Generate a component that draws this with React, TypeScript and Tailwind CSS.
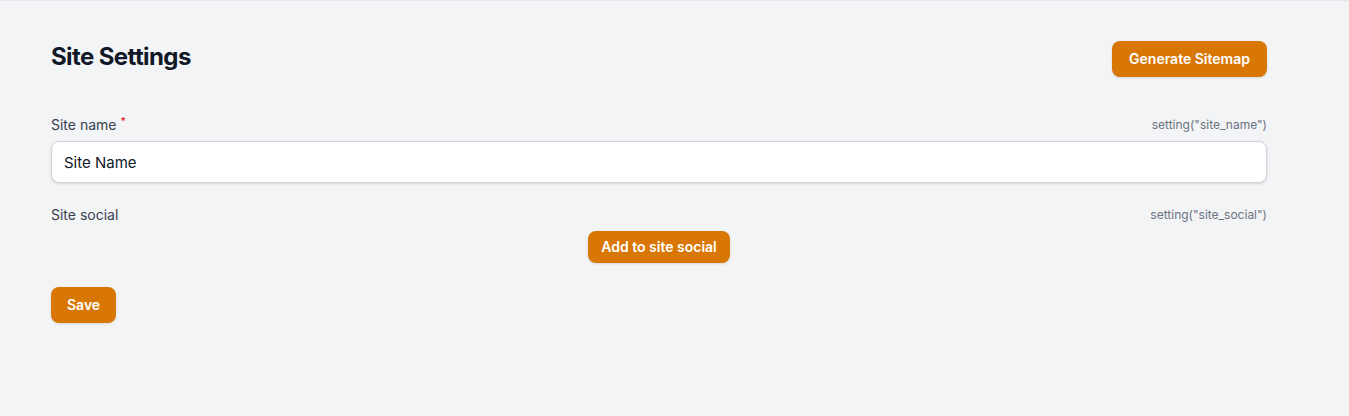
export default function App() {
    return (
        <div className="min-h-[416px] bg-[#f3f4f6] border-t border-[#e5e7eb] font-['Inter',sans-serif]">
            <div className="w-[1216px] ml-[51px] pt-[40px]">
                {/* Header */}
                <div className="flex items-center justify-between">
                    <h1 className="mb-[4px] text-2xl font-bold tracking-tight text-[#111827]">Site Settings</h1>
                    <button className="h-9 px-[17px] rounded-lg bg-[#d97706] text-white text-sm font-semibold shadow-sm">
                        Generate Sitemap
                    </button>
                </div>

                {/* Form */}
                <div className="mt-[38px] flex flex-col">
                    <div className="flex items-center justify-between h-5">
                        <label className="text-sm text-[#374151]">
                            Site name<sup className="text-[#dc2626] font-medium ml-1">*</sup>
                        </label>
                        <span className="text-xs text-[#6b7280]">setting("site_name")</span>
                    </div>
                    <input
                        readOnly
                        value="Site Name"
                        className="mt-[6px] h-[42px] w-full rounded-lg border border-[#d1d5db] bg-white px-3 text-[15px] text-[#111827] shadow-sm outline-none"
                    />

                    <div className="mt-[22px] flex items-center justify-between h-5">
                        <span className="text-sm text-[#374151]">Site social</span>
                        <span className="text-xs text-[#6b7280]">setting("site_social")</span>
                    </div>
                    <div className="mt-[6px] flex justify-center">
                        <button className="h-8 px-[13px] rounded-lg bg-[#d97706] text-white text-sm font-semibold shadow-sm">
                            Add to site social
                        </button>
                    </div>
                </div>

                <div className="mt-6">
                    <button className="h-9 px-4 rounded-lg bg-[#d97706] text-white text-sm font-semibold shadow-sm">
                        Save
                    </button>
                </div>
            </div>
        </div>
    );
}
